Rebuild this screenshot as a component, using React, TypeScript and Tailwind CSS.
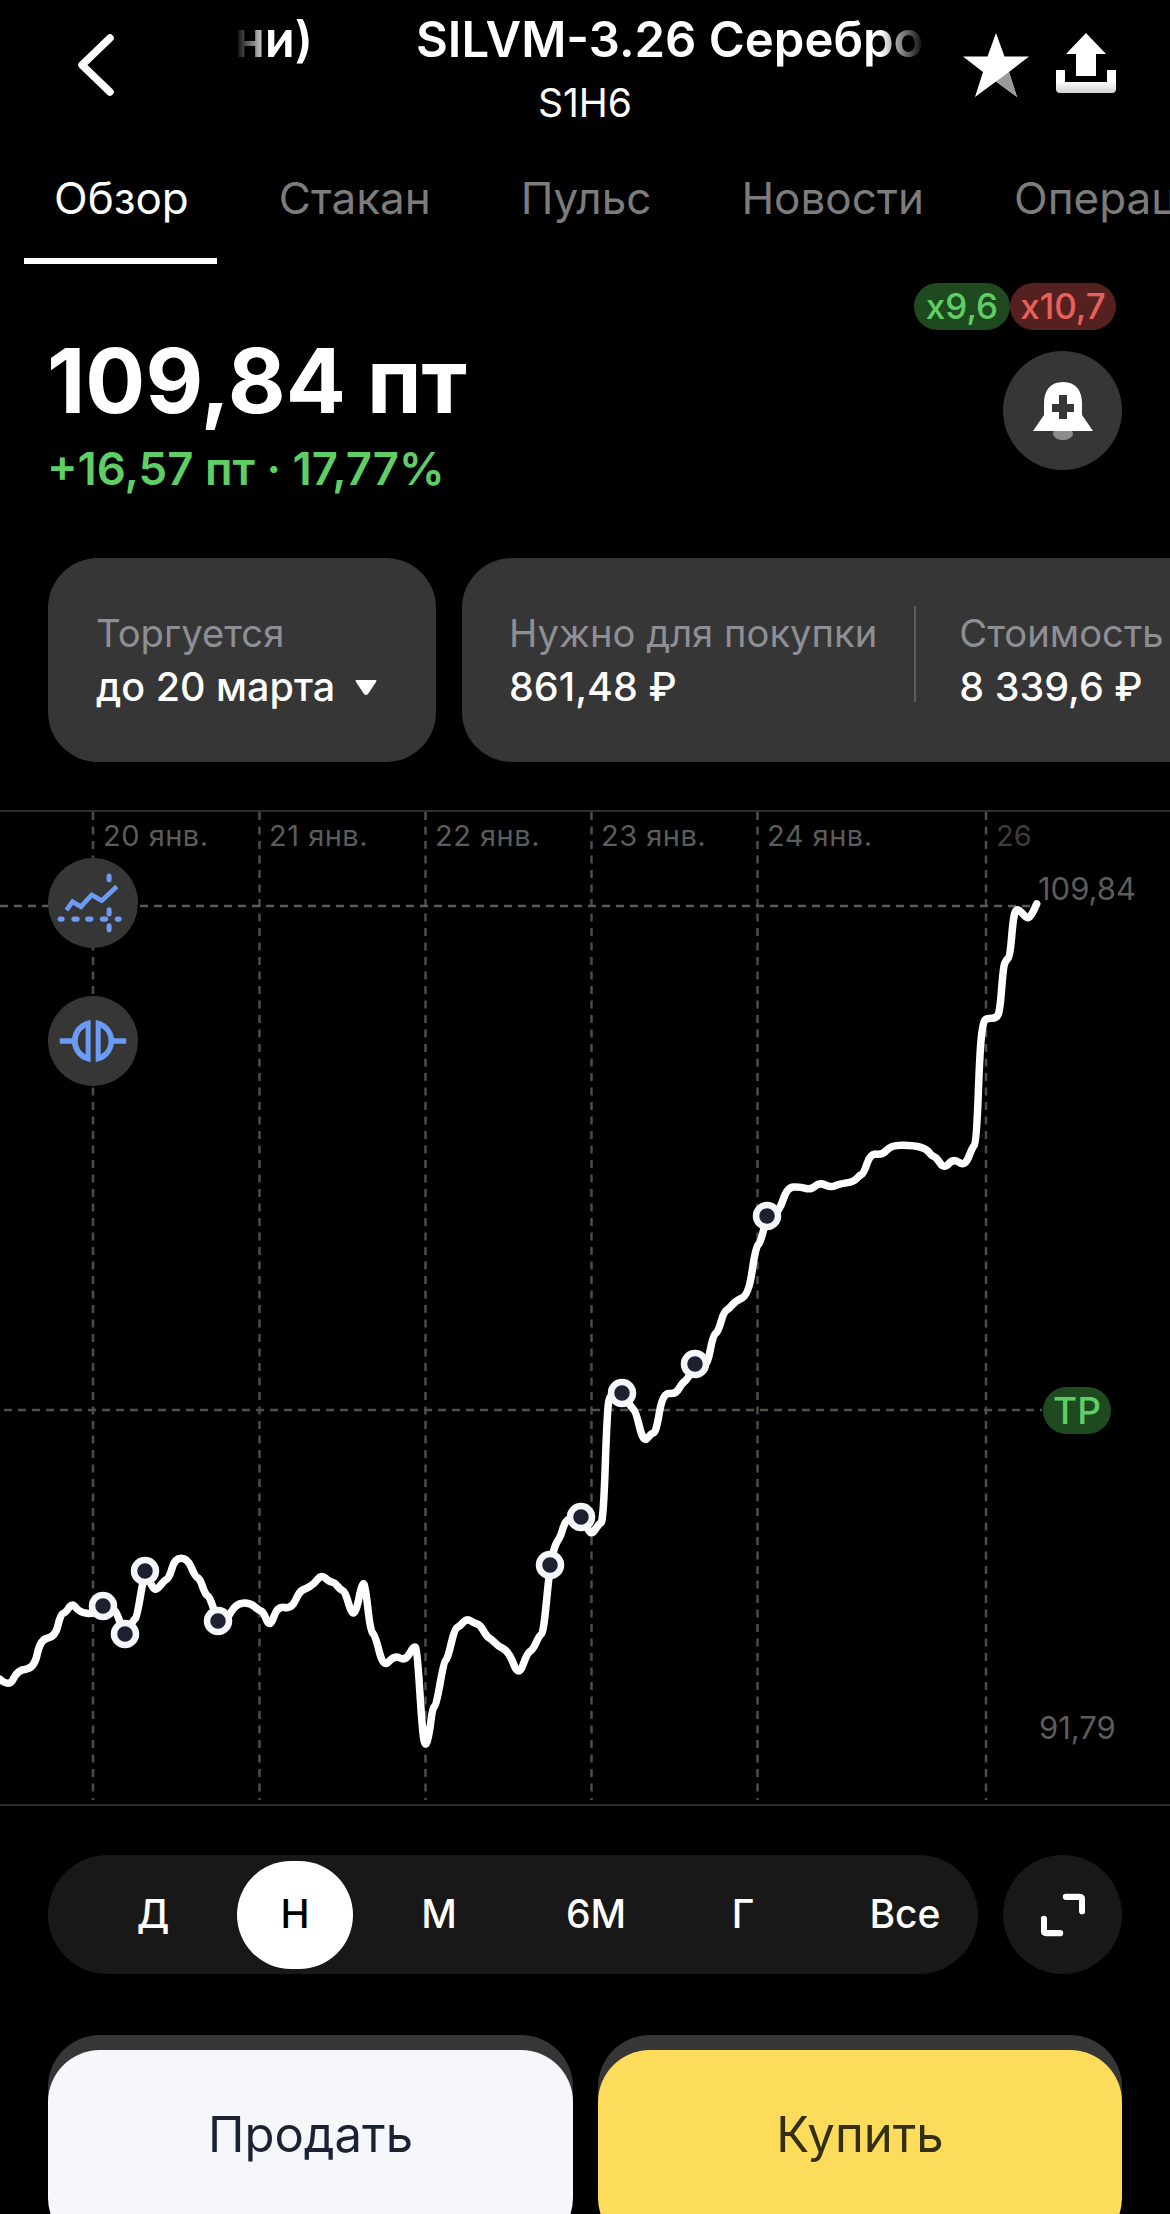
import { Fragment } from 'react';

type Pt = [number, number];

// traced from the reference, page coordinates after the mapping below
const partA: Pt[] = [[0,598],[25,622],[45,570],[90,565],[105,478],[145,470],[158,402],[172,398],[188,368],[208,397],[245,403],[270,378],[300,385],[315,430],[325,462],[350,420],[358,410],[378,272],[393,310],[407,335],[430,300],[442,295],[457,235],[490,235],[510,290],[522,295],[537,345],[548,350],[568,422],[590,425],[615,372],[652,367],[678,392],[688,395],[705,445],[725,378],[762,387],[782,335],[800,325],[820,313],[840,283],[860,305],[875,308],[890,330],[902,335],[918,400],[930,398],[947,305],[955,320],[968,455],[980,465],[1002,565],[1030,525],[1060,543],[1082,495],[1090,510],[1104,760],[1112,803],[1122,760],[1130,685],[1140,675],[1160,545],[1170,535],[1188,445],[1200,440],[1220,415],[1240,430],[1255,435],[1272,470],[1285,478],[1300,497],[1330,515],[1355,592],[1378,518],[1392,510],[1410,465],[1420,460],[1437,255]];
const partB: Pt[] = [[145,1330],[158,1312],[172,1255],[210,1252],[228,1285],[240,1305],[258,1272],[270,1265],[280,930],[288,880],[320,880],[345,925],[355,935],[375,1030],[395,1000],[408,997],[425,878],[460,883],[475,850],[490,838],[510,792],[540,805],[557,705],[570,695],[585,635],[600,625],[615,603],[650,585],[668,440],[680,430],[698,348],[730,335],[750,262],[785,260],[812,270],[835,247],[865,263],[885,252],[925,245],[940,225],[950,222],[968,160],[1000,165],[1022,135],[1085,137],[1115,147],[1128,168],[1140,172],[1160,207],[1185,175],[1215,200],[1235,140],[1245,130]];
const partC: Pt[] = [[300,800],[310,725],[320,715],[350,715],[360,690],[370,560],[378,540],[390,530],[400,410],[410,385],[425,397],[442,417],[455,405],[470,372]];

const pricePoints: Pt[] = [
  ...partA.map(([x, y]): Pt => [x / 2.613, 1480 + y / 3]),
  ...partB.map(([x, y]): Pt => [500 + x / 2.613, 1100 + y / 3]),
  ...partC.map(([x, y]): Pt => [880 + x / 3, 780 + y / 3]),
];

function smoothPath(pts: Pt[]) {
  let d = `M${pts[0][0]} ${pts[0][1]}`;
  for (let i = 1; i < pts.length - 1; i++) {
    const mx = (pts[i][0] + pts[i + 1][0]) / 2;
    const my = (pts[i][1] + pts[i + 1][1]) / 2;
    d += ` Q${pts[i][0]} ${pts[i][1]} ${mx} ${my}`;
  }
  const last = pts[pts.length - 1];
  return d + ` L${last[0]} ${last[1]}`;
}

const markers: Pt[] = [[103, 1606], [125, 1634], [145, 1571], [218, 1621], [550, 1565], [581, 1517], [622, 1393], [695, 1364], [767, 1216]];
const gridX = [93, 259.5, 425.5, 591.5, 757.5, 986];
const dates = [
  { label: '20 янв.', cls: 'left-[103px]' },
  { label: '21 янв.', cls: 'left-[269px]' },
  { label: '22 янв.', cls: 'left-[435px]' },
  { label: '23 янв.', cls: 'left-[601px]' },
  { label: '24 янв.', cls: 'left-[767px]' },
];
const ranges = [
  { label: 'Д', cls: 'w-[48px]' },
  { label: 'Н', cls: 'ml-[60px] w-[116px] h-[108px] rounded-full bg-white text-black' },
  { label: 'М', cls: 'ml-[36px] w-[100px]' },
  { label: '6М', cls: 'ml-[57px] w-[100px]' },
  { label: 'Г', cls: 'ml-[57px] w-[80px]' },
  { label: 'Все', cls: 'ml-[52px] w-[140px]' },
];

function PriceChart() {
  return (
    <div className="relative mt-[48px] h-[996px] shrink-0 border-y-2 border-[#2e2e2e]">
      <svg className="absolute inset-0" width="1170" height="992" viewBox="0 812 1170 992" fill="none">
        {gridX.map((x) => (
          <line key={x} x1={x} x2={x} y1="812" y2="1800" stroke="#4c4c4c" strokeWidth="2.5" strokeDasharray="8 6.5" />
        ))}
        <line x1="0" x2="1030" y1="906" y2="906" stroke="#5a5a5a" strokeWidth="2.5" strokeDasharray="8 6" />
        <line x1="4" x2="1042" y1="1410" y2="1410" stroke="#42593f" strokeWidth="2.5" strokeDasharray="8 6" />
        <path d={smoothPath(pricePoints)} stroke="#fff" strokeWidth="7.5" strokeLinecap="round" strokeLinejoin="round" />
        {markers.map(([x, y]) => (
          <Fragment key={x}>
            <circle cx={x} cy={y} r="11" fill="#1c2030" stroke="#f4f6fa" strokeWidth="6.5" />
          </Fragment>
        ))}
      </svg>

      {dates.map((d) => (
        <span key={d.label} className={`absolute top-[6px] text-[29px] leading-[36px] tracking-[0.5px] text-[#5c5c5c] ${d.cls}`}>
          {d.label}
        </span>
      ))}
      <span className="absolute left-[996px] top-[6px] text-[29px] leading-[36px] text-[#3c3c3c]">26</span>
      <span className="absolute left-[1038px] top-[58px] text-[31px] leading-[38px] text-[#5c5c5c]">109,84</span>
      <span className="absolute left-[1039px] top-[898px] text-[31px] leading-[36px] text-[#5c5c5c]">91,79</span>
      <span className="absolute left-[1043px] top-[575px] flex h-[47px] w-[68px] items-center justify-center rounded-full bg-[#1f4a20] text-[37px] font-medium text-[#5fcf65]">
        ТР
      </span>

      <div className="absolute left-[48px] top-[46px] h-[90px] w-[90px] rounded-full bg-[#363636]">
        <svg width="90" height="90" viewBox="145 235 268 268" fill="none">
          <path d="M200 390 L218 365 L243 380 L275 345 L305 362 L350 320" stroke="#6b9bf5" strokeWidth="14" />
          <path d="M181 417 h6 M222 417 h10 M263 417 h10 M307 417 h10 M351 417 h6" stroke="#6b9bf5" strokeWidth="15" strokeLinecap="round" />
          <path d="M327 289 V300 M327 389 V402 M327 437 V449" stroke="#6b9bf5" strokeWidth="15" strokeLinecap="round" />
        </svg>
      </div>
      <div className="absolute left-[48px] top-[184px] h-[90px] w-[90px] rounded-full bg-[#363636]">
        <svg width="90" height="90" viewBox="145 648 268 268">
          <circle cx="279" cy="782" r="63" fill="#6b9bf5" />
          <path d="M180 782 H378" stroke="#6b9bf5" strokeWidth="17" />
          <rect x="272" y="715" width="15" height="134" fill="#363636" />
          <path d="M257 742 V822 A46 46 0 0 1 257 742 Z" fill="#363636" />
          <path d="M302 742 V822 A46 46 0 0 0 302 742 Z" fill="#363636" />
        </svg>
      </div>
    </div>
  );
}

export default function App() {
  return (
    <div
      className="flex h-[2214px] w-[1170px] flex-col overflow-hidden bg-black text-white"
      style={{ fontFamily: 'Inter, "Noto Sans", sans-serif' }}
    >
      {/* header */}
      <header className="relative h-[128px] shrink-0">
        <svg className="absolute left-[74px] top-[32px]" width="42" height="66" viewBox="0 0 42 66" fill="none">
          <path d="M36 6 L8 33 L36 60" stroke="#fff" strokeWidth="7.5" strokeLinecap="round" strokeLinejoin="round" />
        </svg>
        <div className="absolute left-[225px] top-[9px] h-[60px] w-[700px] overflow-hidden [mask-image:linear-gradient(90deg,transparent_10px,black_45px,black_655px,transparent_700px)]">
          <div className="flex h-full items-center whitespace-nowrap text-[49px] font-semibold leading-none">
            <span className="w-[88px] text-right">ни)</span>
            <span className="ml-[103px]">SILVM-3.26 Серебро</span>
          </div>
        </div>
        <div className="absolute left-0 top-[83px] w-full text-center text-[39px] leading-[40px]">S1H6</div>
        <svg className="absolute left-[962px] top-[32px]" width="68" height="66" viewBox="0 0 68 66">
          <path d="M34 1 L42.5 24.5 L67 24.5 L47 40 L55 65 L34 49.5 L13 65 L21 40 L1 24.5 L25.5 24.5 Z" fill="#fff" />
          <path d="M47 40 L55 65 L34 49.5 Z" fill="#9a9a9a" />
        </svg>
        <svg className="absolute left-[1055px] top-[32px]" width="62" height="62" viewBox="0 0 62 62">
          <defs>
            <linearGradient id="tray" x1="0" x2="0" y1="0" y2="1">
              <stop offset="0" stopColor="#fff" />
              <stop offset="0.5" stopColor="#fff" />
              <stop offset="1" stopColor="#cfcfcf" />
            </linearGradient>
          </defs>
          <path d="M31 1 L51 22 L41 22 L41 44 L21 44 L21 22 L11 22 Z" fill="#fff" />
          <path d="M1 38 H10 V50 H52 V38 H61 V57 Q61 61 57 61 H5 Q1 61 1 57 Z" fill="url(#tray)" />
        </svg>
      </header>

      {/* tabs */}
      <nav className="flex h-[136px] shrink-0 items-start gap-[90px] whitespace-nowrap pl-[54px] pt-[45px] text-[44px] leading-[50px] text-[#7c7c7c]">
        <span className="relative w-[139px] text-white">
          Обзор
          <span className="absolute -left-[30px] -right-[28px] top-[85px] h-[6px] bg-white" />
        </span>
        <span>Стакан</span>
        <span>Пульс</span>
        <span>Новости</span>
        <span>Операции</span>
      </nav>

      {/* price */}
      <section className="flex h-[294px] shrink-0 justify-between pl-[47px] pr-[48px]">
        <div className="pt-[65px]">
          <div className="text-[89px] font-bold leading-[104px]">109,84 пт</div>
          <div className="mt-[10px] text-[45.5px] font-semibold leading-[52px] text-[#5fcf65]">+16,57 пт · 17,77%</div>
        </div>
        <div className="flex flex-col items-end pt-[19px]">
          <div className="flex pr-[6px] text-[35px] font-medium leading-[47px]">
            <span className="flex h-[47px] w-[96px] items-center justify-center rounded-[24px] bg-[#1f4a20] text-[#5fcf65]">x9,6</span>
            <span className="flex h-[47px] w-[106px] items-center justify-center rounded-[24px] bg-[#552120] text-[#e8605c]">x10,7</span>
          </div>
          <div className="mt-[21px] flex h-[119px] w-[119px] items-center justify-center rounded-full bg-[#363636]">
            <svg width="60" height="60" viewBox="0 0 60 60">
              <rect x="20" y="46" width="20" height="13" rx="9" fill="#8c8c8c" />
              <path d="M30 1 C43 1 49 10 49 22 V34 L60 50 H0 L11 34 V22 C11 10 17 1 30 1 Z" fill="#fff" />
              <path d="M26 14 H34 V23 H41 V31 H34 V38 H26 V31 H19 V23 H26 Z" fill="#363636" />
            </svg>
          </div>
        </div>
      </section>

      {/* info cards */}
      <section className="flex h-[204px] shrink-0 gap-[26px] whitespace-nowrap pl-[48px] text-[38.2px] leading-[50px]">
        <div className="flex w-[388px] shrink-0 flex-col justify-center gap-[4px] rounded-[50px] bg-[#363636] pl-[48px]">
          <span className="text-[#8d8f94]">Торгуется</span>
          <span className="flex items-center text-[39.5px] font-medium">
            до 20 марта
            <svg className="ml-[20px]" width="22" height="17" viewBox="0 0 22 17">
              <path d="M1 1 H21 Q22 1 21 3 L13 15 Q11 17 9 15 L1 3 Q0 1 1 1 Z" fill="#fff" />
            </svg>
          </span>
        </div>
        <div className="flex w-[800px] shrink-0 items-center rounded-[50px] bg-[#363636] pl-[47px]">
          <div className="flex flex-col gap-[4px]">
            <span className="text-[#8d8f94]">Нужно для покупки</span>
            <span className="text-[39.5px] font-medium">861,48 ₽</span>
          </div>
          <div className="mb-[12px] ml-[37px] mr-[43px] h-[96px] w-[2px] bg-[#5c5c5c]" />
          <div className="flex flex-col gap-[4px]">
            <span className="text-[#8d8f94]">Стоимость</span>
            <span className="text-[39.5px] font-medium">8 339,6 ₽</span>
          </div>
        </div>
      </section>

      <PriceChart />

      {/* range picker */}
      <section className="mt-[49px] flex h-[119px] shrink-0 items-center justify-between px-[48px]">
        <div className="flex h-[119px] w-[930px] items-center rounded-full bg-[#181818] pl-[81px] text-[39px] font-medium">
          {ranges.map((r) => (
            <span key={r.label} className={`flex items-center justify-center ${r.cls}`}>
              {r.label}
            </span>
          ))}
        </div>
        <div className="flex h-[119px] w-[119px] items-center justify-center rounded-full bg-[#181818]">
          <svg width="44" height="44" viewBox="0 0 46 46" fill="none">
            <path d="M26 4 H40 Q43 4 43 7 V19 M3 27 V39 Q3 42 6 42 H20" stroke="#fff" strokeWidth="6.5" strokeLinecap="round" />
          </svg>
        </div>
      </section>

      {/* actions */}
      <section className="mt-[76px] flex shrink-0 gap-[25px] px-[48px] text-[49px] leading-none">
        <div className="relative h-[200px] w-[525px]">
          <div className="absolute -top-[15px] left-0 h-[120px] w-full rounded-[52px] bg-[#363636]" />
          <div className="absolute inset-0 flex items-start justify-center rounded-[52px] bg-[#f5f7fa] pt-[60px] text-[#1b2232]">Продать</div>
        </div>
        <div className="relative h-[200px] w-[524px]">
          <div className="absolute -top-[15px] left-0 h-[120px] w-full rounded-[52px] bg-[#363636]" />
          <div className="absolute inset-0 flex items-start justify-center rounded-[52px] bg-[#fcdc5a] pt-[60px] text-[#332e14]">Купить</div>
        </div>
      </section>
    </div>
  );
}
